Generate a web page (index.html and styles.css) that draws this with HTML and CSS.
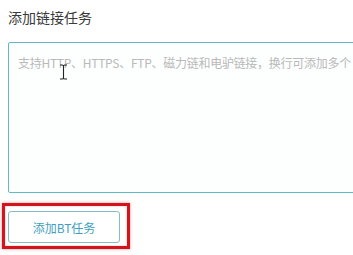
FILE: index.html
```html
<!DOCTYPE html>
<html lang="zh-CN">
<head>
<meta charset="utf-8">
<link rel="stylesheet" href="styles.css">
</head>
<body>
<div class="page">
  <div class="title">添加链接任务</div>
  <div class="input-wrap">
    <div class="textarea"><span class="placeholder">支持HTTP、HTTPS、FTP、磁力链和电驴链接，换行可添加多个</span></div>
    <svg class="ibeam" width="9" height="16" viewBox="0 0 9 16"><path d="M1 1h2.5M5.5 1H8M4.5 1.5v13M1 15h2.5M5.5 15H8M3.5 1.2c.6 0 1 .3 1 .8M5.5 1.2c-.6 0-1 .3-1 .8M3.5 14.8c.6 0 1-.3 1-.8M5.5 14.8c-.6 0-1-.3-1-.8" stroke="#222" stroke-width="1.1" fill="none"/></svg>
  </div>
  <div class="actions">
    <button class="bt-btn">添加BT任务</button>
    <div class="highlight"></div>
  </div>
</div>
</body>
</html>
```
FILE: styles.css
```css
html, body {
  margin: 0;
  padding: 0;
  background: #ffffff;
  overflow: hidden;
}
.page {
  width: 353px;
  height: 255px;
  overflow: hidden;
  padding: 8px 0 0 8px;
  box-sizing: border-box;
  font-family: "Microsoft YaHei", "Noto Sans CJK SC", "Noto Sans", sans-serif;
}
.title {
  font-size: 14px;
  line-height: 18px;
  color: #3a3a3a;
  height: 18px;
}
.input-wrap {
  position: relative;
  margin-top: 16px;
}
.textarea {
  width: 380px;
  height: 151px;
  box-sizing: border-box;
  border: 1px solid #5fbac4;
  border-radius: 2px;
  background: #fdfefe;
  padding: 12px 0 0 9px;
  font-size: 12px;
  line-height: 16px;
}
.placeholder {
  font-size: 12px;
  line-height: 16px;
  color: #b9b9b9;
  white-space: nowrap;
  letter-spacing: -0.27px;
}
.ibeam {
  position: absolute;
  left: 51px;
  top: 22px;
}
.actions {
  position: relative;
  margin-top: 18px;
}
.bt-btn {
  display: block;
  width: 112px;
  height: 32px;
  box-sizing: border-box;
  border: 1px solid #86bcc7;
  border-radius: 3px;
  background: #ffffff;
  color: #3f9fc2;
  font-family: "Microsoft YaHei", "Noto Sans CJK SC", "Noto Sans", sans-serif;
  font-size: 12px;
  padding: 0;
}
.highlight {
  position: absolute;
  left: -6px;
  top: -8px;
  width: 128px;
  height: 46px;
  box-sizing: border-box;
  border: 3px solid #d3141c;
  box-shadow: 0 0 3px rgba(211, 20, 28, 0.45), inset 0 0 2px rgba(211, 20, 28, 0.35);
}
```
